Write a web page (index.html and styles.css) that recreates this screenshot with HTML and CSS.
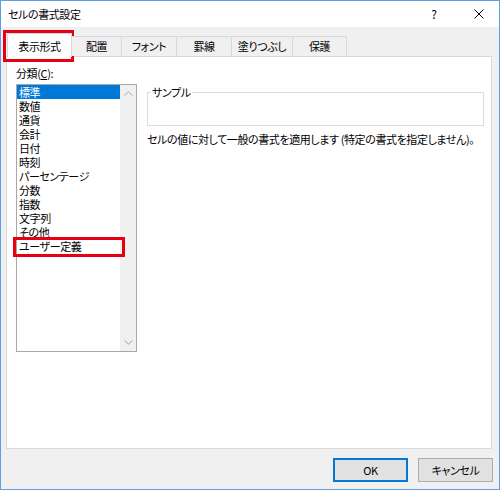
FILE: index.html
```html
<!DOCTYPE html>
<html lang="ja">
<head>
<meta charset="utf-8">
<title>セルの書式設定</title>
<link rel="stylesheet" href="styles.css">
</head>
<body>
<div class="window">
  <div class="titlebar">
    <span class="title">セルの書式設定</span>
    <span class="help">?</span>
    <svg class="close" width="10" height="10" viewBox="0 0 10 10"><path d="M0.5 0.5 L9.5 9.5 M9.5 0.5 L0.5 9.5" stroke="#000" stroke-width="1" fill="none"/></svg>
  </div>
  <div class="body">
    <div class="tabs">
      <div class="tab active">表示形式</div>
      <div class="tab w50">配置</div>
      <div class="tab w55">フォント</div>
      <div class="tab w55">罫線</div>
      <div class="tab w61">塗りつぶし</div>
      <div class="tab w54">保護</div>
    </div>
    <div class="panel">
      <div class="leftcol">
        <div class="label">分類(<span class="ul">C</span>):</div>
        <div class="listbox">
          <ul class="items">
            <li class="sel">標準</li>
            <li>数値</li>
            <li>通貨</li>
            <li>会計</li>
            <li>日付</li>
            <li>時刻</li>
            <li>パーセンテージ</li>
            <li>分数</li>
            <li>指数</li>
            <li>文字列</li>
            <li>その他</li>
            <li>ユーザー定義</li>
          </ul>
          <div class="scrollbar">
            <div class="arrow"><svg width="9" height="5" viewBox="0 0 9 5"><path d="M0.5 4.5 L4.5 0.8 L8.5 4.5" stroke="#a6a6a6" stroke-width="1" fill="none"/></svg></div>
            <div class="arrow"><svg width="9" height="5" viewBox="0 0 9 5"><path d="M0.5 0.5 L4.5 4.2 L8.5 0.5" stroke="#a6a6a6" stroke-width="1" fill="none"/></svg></div>
          </div>
        </div>
      </div>
      <div class="rightcol">
        <fieldset class="sample">
          <legend>サンプル</legend>
          <div class="sample-body"></div>
        </fieldset>
        <p class="desc">セルの値に対して一般の書式を適用します (特定の書式を指定しません)。</p>
      </div>
    </div>
    <div class="actions">
      <button class="btn default">OK</button>
      <button class="btn">キャンセル</button>
    </div>
  </div>
  <div class="mark mark-tab"></div>
  <div class="mark mark-item"></div>
</div>
</body>
</html>
```
FILE: styles.css
```css
* { box-sizing: border-box; }
html, body { margin: 0; padding: 0; background: #fff; }
.window {
  position: relative;
  width: 500px;
  height: 490px;
  border: 1px solid #5d9fe0;
  display: flex;
  flex-direction: column;
  font-family: "Noto Sans CJK JP", "Noto Sans", sans-serif;
  font-size: 11px;
  letter-spacing: -0.4px;
  font-feature-settings: "palt";
  color: #000;
}
.titlebar {
  height: 26px;
  background: #fff;
  display: flex;
  align-items: center;
  flex: none;
}
.title { padding-left: 7px; line-height: 14px; }
.help { margin-left: auto; line-height: 14px; width: 8px; text-align: center; font-size: 12px; }
.close { margin-left: 36px; margin-right: 15px; display: block; }
.body {
  flex: 1;
  background: #f0f0f0;
  display: flex;
  flex-direction: column;
  padding: 6px 7px 7px 5px;
}
.tabs {
  display: flex;
  align-items: flex-end;
  height: 24px;
  margin-left: 1px;
  margin-bottom: -1px;
  position: relative;
  z-index: 1;
  flex: none;
}
.tab {
  height: 20px;
  margin-bottom: 1px;
  border-top: 1px solid #d9d9d9;
  border-right: 1px solid #d9d9d9;
  background: #f0f0f0;
  line-height: 19px;
  text-align: center;
}
.tab.active {
  width: 65px;
  height: 24px;
  margin-bottom: 0;
  border-left: 1px solid #d9d9d9;
  background: #fff;
  padding-top: 2px;
  line-height: 20px;
}
.w50 { width: 50px; }
.w55 { width: 55px; }
.w61 { width: 61px; }
.w54 { width: 54px; }
.panel {
  flex: 1;
  background: #fff;
  border: 1px solid #d9d9d9;
  display: flex;
  gap: 10px;
  padding: 9px 7px 0 9px;
}
.leftcol { width: 121px; flex: none; }
.label { line-height: 14px; margin-bottom: 4px; }
.ul { text-decoration: underline; }
.listbox {
  height: 268px;
  border: 1px solid #a8a8a8;
  display: flex;
}
.items {
  flex: 1;
  list-style: none;
  margin: 0;
  padding: 0;
}
.items li { line-height: 14px; height: 14px; padding-left: 2px; white-space: nowrap; }
.items li.sel { background: #0078d7; color: #fff; }
.scrollbar {
  width: 16px;
  background: #f0f0f0;
  display: flex;
  flex-direction: column;
  justify-content: space-between;
}
.arrow {
  height: 17px;
  display: flex;
  align-items: center;
  justify-content: center;
}
.arrow svg { display: block; }
.rightcol { flex: 1; }
.sample {
  margin: 19px 0 0 0;
  padding: 0;
  border: 1px solid #dcdcdc;
}
.sample legend {
  line-height: 14px;
  padding: 0 1px;
  margin-left: 3px;
}
.sample-body { height: 26px; }
.desc { margin: 6px 0 0 0; line-height: 14px; white-space: nowrap; }
.actions {
  display: flex;
  justify-content: flex-end;
  gap: 10px;
  margin-top: 9px;
  margin-right: -1px;
  flex: none;
}
.btn {
  width: 75px;
  height: 24px;
  background: #e1e1e1;
  border: 1px solid #adadad;
  font-family: inherit;
  font-size: 11px;
  letter-spacing: -0.4px;
  font-feature-settings: "palt";
  color: #000;
  padding: 0;
}
.btn.default { border-color: #0078d7; box-shadow: inset 0 0 0 1px #0078d7; }
.mark {
  position: absolute;
  border: 3px solid #e60012;
}
.mark-tab { left: 2px; top: 29px; width: 71px; height: 32px; }
.mark-item { left: 12px; top: 236px; width: 112px; height: 20px; }
```
